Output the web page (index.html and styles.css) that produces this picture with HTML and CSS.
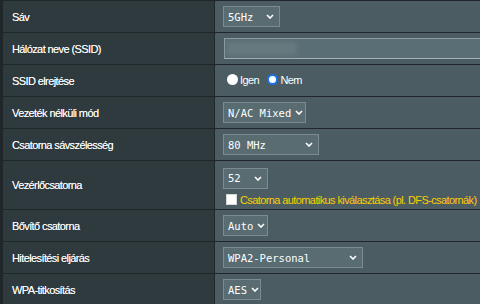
FILE: index.html
```html
<!DOCTYPE html>
<html lang="hu">
<head>
    <meta charset="UTF-8">
    <title>Vezeték nélküli – Általános</title>
    <link rel="stylesheet" href="styles.css">
</head>
<body>
    <table class="form-table">
        <tr>
            <th>Sáv</th>
            <td>
                <div class="select w-57"><span>5GHz</span><svg class="chev" viewBox="0 0 8 5"><path d="M1 1l3 3 3-3"/></svg></div>
            </td>
        </tr>
        <tr>
            <th>Hálózat neve (SSID)</th>
            <td>
                <div class="text-input"><span class="blurred"></span></div>
            </td>
        </tr>
        <tr>
            <th>SSID elrejtése</th>
            <td>
                <label class="radio"><span class="dot"></span>Igen</label>
                <label class="radio"><span class="dot checked"></span>Nem</label>
            </td>
        </tr>
        <tr>
            <th>Vezeték nélküli mód</th>
            <td>
                <div class="select w-83"><span>N/AC Mixed</span><svg class="chev" viewBox="0 0 8 5"><path d="M1 1l3 3 3-3"/></svg></div>
            </td>
        </tr>
        <tr>
            <th>Csatorna sávszélesség</th>
            <td>
                <div class="select w-96"><span>80 MHz</span><svg class="chev" viewBox="0 0 8 5"><path d="M1 1l3 3 3-3"/></svg></div>
            </td>
        </tr>
        <tr class="tall">
            <th>Vezérlőcsatorna</th>
            <td>
                <div class="select w-45"><span>52</span><svg class="chev" viewBox="0 0 8 5"><path d="M1 1l3 3 3-3"/></svg></div>
                <label class="check"><span class="box"></span>Csatorna automatikus kiválasztása (pl. DFS-csatornák)</label>
            </td>
        </tr>
        <tr>
            <th>Bővítő csatorna</th>
            <td>
                <div class="select w-45"><span>Auto</span><svg class="chev" viewBox="0 0 8 5"><path d="M1 1l3 3 3-3"/></svg></div>
            </td>
        </tr>
        <tr>
            <th>Hitelesítési eljárás</th>
            <td>
                <div class="select w-140"><span>WPA2-Personal</span><svg class="chev" viewBox="0 0 8 5"><path d="M1 1l3 3 3-3"/></svg></div>
            </td>
        </tr>
        <tr>
            <th>WPA-titkosítás</th>
            <td>
                <div class="select w-38"><span>AES</span><svg class="chev" viewBox="0 0 8 5"><path d="M1 1l3 3 3-3"/></svg></div>
            </td>
        </tr>
    </table>
</body>
</html>
```

FILE: styles.css
```css
:root {
    --th-bg: #2e3a3e;
    --td-bg: #4b5d62;
    --line: #1f272a;
    --field-bg: #586c72;
    --field-border: #7b8b90;
    --yellow: #ffcc00;
}

* {
    margin: 0;
    padding: 0;
    box-sizing: border-box;
}

body {
    background: var(--line);
    font-family: "Liberation Sans", Arial, sans-serif;
    font-size: 11px;
    letter-spacing: -0.6px;
    color: #fff;
    overflow: hidden;
    padding: 0 0 0 2px;
}

.form-table {
    border-collapse: collapse;
    width: 600px;
}

.form-table th,
.form-table td {
    border: 1px solid var(--line);
    height: 32px;
    vertical-align: middle;
}

.form-table th {
    width: 212px;
    background: var(--th-bg);
    text-align: left;
    font-weight: normal;
    padding-left: 9px;
    text-shadow: 0 0 0.5px rgba(255, 255, 255, 0.6);
}

.form-table td {
    background: var(--td-bg);
    padding-left: 8px;
}

.form-table tr.tall th,
.form-table tr.tall td {
    height: 49px;
}

.tall td {
    padding-top: 3px;
}

.select {
    display: flex;
    align-items: center;
    justify-content: space-between;
    height: 21px;
    padding: 0 5px 0 4px;
    background: var(--field-bg);
    border: 1px solid var(--field-border);
    font-family: "DejaVu Sans Mono", monospace;
    font-size: 10.5px;
    letter-spacing: 0;
    white-space: nowrap;
}

.select span {
    margin-right: 4px;
}

.w-57 { width: 57px; }
.w-83 { width: 83px; }
.w-96 { width: 96px; }
.w-45 { width: 45px; }
.w-140 { width: 140px; }
.w-38 { width: 38px; }

.chev {
    flex-shrink: 0;
    width: 8px;
    height: 5px;
    fill: none;
    stroke: #fff;
    stroke-width: 1.6;
}

.text-input {
    width: 300px;
    height: 21px;
    margin-left: 1px;
    padding: 3px 2px;
    background: #5a6f75;
    border: 1px solid #8f9ca0;
    border-bottom-color: #a6b2b5;
}

.blurred {
    display: block;
    width: 70px;
    height: 13px;
    background: #66797e;
    filter: blur(2px);
}

.radio {
    display: inline-flex;
    align-items: center;
    gap: 2px;
    margin-right: 2px;
    padding-left: 4px;
}

.dot {
    width: 11px;
    height: 11px;
    border-radius: 50%;
    background: #fff;
}

.dot.checked {
    border: 2.5px solid #1a73e8;
}

.check {
    display: flex;
    align-items: center;
    gap: 3px;
    margin-top: 5px;
    padding-left: 3px;
    color: var(--yellow);
    white-space: nowrap;
}

.box {
    width: 11px;
    height: 11px;
    background: #fff;
    border: 1px solid #d8d8d8;
}
```
